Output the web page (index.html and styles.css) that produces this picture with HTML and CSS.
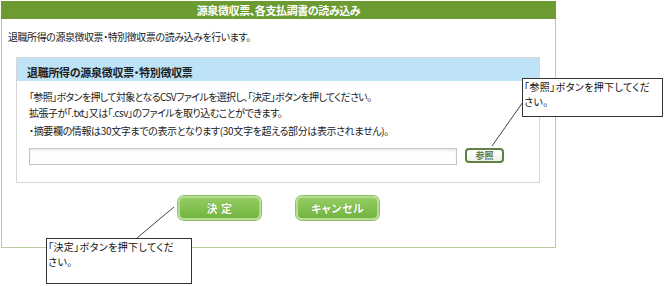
FILE: index.html
```html
<!DOCTYPE html>
<html lang="ja">
<head>
<meta charset="utf-8">
<title>源泉徴収票、各支払調書の読み込み</title>
<link rel="stylesheet" href="styles.css">
</head>
<body>
<div class="panel">
  <div class="panel-head">源泉徴収票、各支払調書の読み込み</div>
  <div class="panel-body">
    <p class="intro">退職所得の源泉徴収票・特別徴収票の読み込みを行います。</p>
    <div class="box">
      <div class="box-head">退職所得の源泉徴収票・特別徴収票</div>
      <div class="box-body">
        <p class="line l1">「参照」ボタンを押して対象となるCSVファイルを選択し、「決定」ボタンを押してください。</p>
        <p class="line l2">拡張子が「.txt」又は「.csv」のファイルを取り込むことができます。</p>
        <p class="line l3">・摘要欄の情報は30文字までの表示となります(30文字を超える部分は表示されません)。</p>
        <div class="file-row">
          <div class="file-input"></div>
          <div class="ref-btn">参照</div>
        </div>
      </div>
    </div>
    <div class="actions">
      <div class="btn">決 定</div>
      <div class="btn">キャンセル</div>
    </div>
  </div>
</div>
<svg class="leaders" width="668" height="286" viewBox="0 0 668 286">
  <line x1="523" y1="102" x2="492" y2="146" stroke="#444" stroke-width="1"/>
  <line x1="137" y1="238" x2="174" y2="207" stroke="#444" stroke-width="1"/>
</svg>
<div class="callout c1"><span class="cl">「参照」ボタンを押下してくだ</span><span class="cl">さい。</span></div>
<div class="callout c2"><span class="cl">「決定」ボタンを押下してくだ</span><span class="cl">さい。</span></div>
</body>
</html>
```
FILE: styles.css
```css
html, body {
  margin: 0;
  padding: 0;
  background: #ffffff;
}
body {
  width: 668px;
  height: 286px;
  position: relative;
  overflow: hidden;
  font-family: "Noto Sans CJK JP", "Noto Sans", sans-serif;
  font-feature-settings: "palt";
  color: #222;
}
.panel {
  margin: 1px 0 0 1px;
  width: 555px;
}
.panel-head {
  height: 18px;
  background: #6b9b31;
  color: #fff;
  font-size: 11px;
  font-weight: bold;
  line-height: 18px;
  text-align: center;
  letter-spacing: -0.4px;
}
.panel-body {
  border: 1px solid #b6cc9c;
  border-top: none;
  padding: 11px 0 27px 0;
}
.intro {
  margin: 0 0 13px 6px;
  font-size: 10px;
  line-height: 14px;
  letter-spacing: -0.45px;
  color: #222;
}
.box {
  margin: 0 15px 0 14px;
  border: 1px solid #d6d6d6;
}
.box-head {
  height: 23px;
  box-sizing: border-box;
  padding: 7px 0 0 10px;
  background: #bee3f6;
  font-size: 11px;
  font-weight: bold;
  line-height: 14px;
  letter-spacing: -0.3px;
  color: #1e1e1e;
}
.box-body {
  padding: 8px 12px 17px 12px;
}
.line {
  margin: 0;
  font-size: 10px;
  line-height: 16px;
  color: #222;
  white-space: nowrap;
}
.l1 { letter-spacing: -0.63px; }
.l2 { letter-spacing: -0.5px; }
.l3 { letter-spacing: -0.36px; margin-top: 2px; }
.file-row {
  display: flex;
  align-items: flex-start;
  gap: 8px;
  margin-top: 9px;
}
.file-input {
  width: 428px;
  height: 17px;
  box-sizing: border-box;
  border: 1px solid #c4c4c4;
  box-shadow: inset 0 2px 2px #ececec;
  background: #fff;
}
.ref-btn {
  width: 39px;
  height: 15px;
  box-sizing: border-box;
  border: 2px solid #5f7f45;
  border-radius: 4px;
  background: linear-gradient(#ffffff, #eef3e8);
  color: #5d7a49;
  font-size: 9px;
  font-weight: bold;
  line-height: 11px;
  text-align: center;
}
.actions {
  display: flex;
  justify-content: center;
  gap: 35px;
  margin-top: 13px;
}
.btn {
  width: 83px;
  height: 24px;
  box-sizing: border-box;
  border: 2px solid #b4dc93;
  border-radius: 6px;
  background: linear-gradient(#94cc63, #72b53f);
  box-shadow: 0 0 0 1px #8fc06a;
  color: #fff;
  font-size: 11px;
  font-weight: bold;
  line-height: 20px;
  text-align: center;
  letter-spacing: 0.5px;
  text-shadow: 0 0 1px #4f8a24;
}
.leaders {
  position: absolute;
  left: 0;
  top: 0;
  pointer-events: none;
}
.callout {
  position: absolute;
  box-sizing: border-box;
  border: 1px solid #333;
  background: #fff;
  padding: 0 0 0 1px;
  display: flex;
  flex-direction: column;
  font-size: 10px;
  line-height: 15px;
  letter-spacing: 0.4px;
  color: #111;
  white-space: nowrap;
}
.cl {
  display: block;
  height: 15px;
}
.c1 {
  left: 522px;
  top: 78px;
  width: 141px;
  height: 39px;
}
.c2 {
  left: 46px;
  top: 238px;
  width: 146px;
  height: 46px;
}
```
